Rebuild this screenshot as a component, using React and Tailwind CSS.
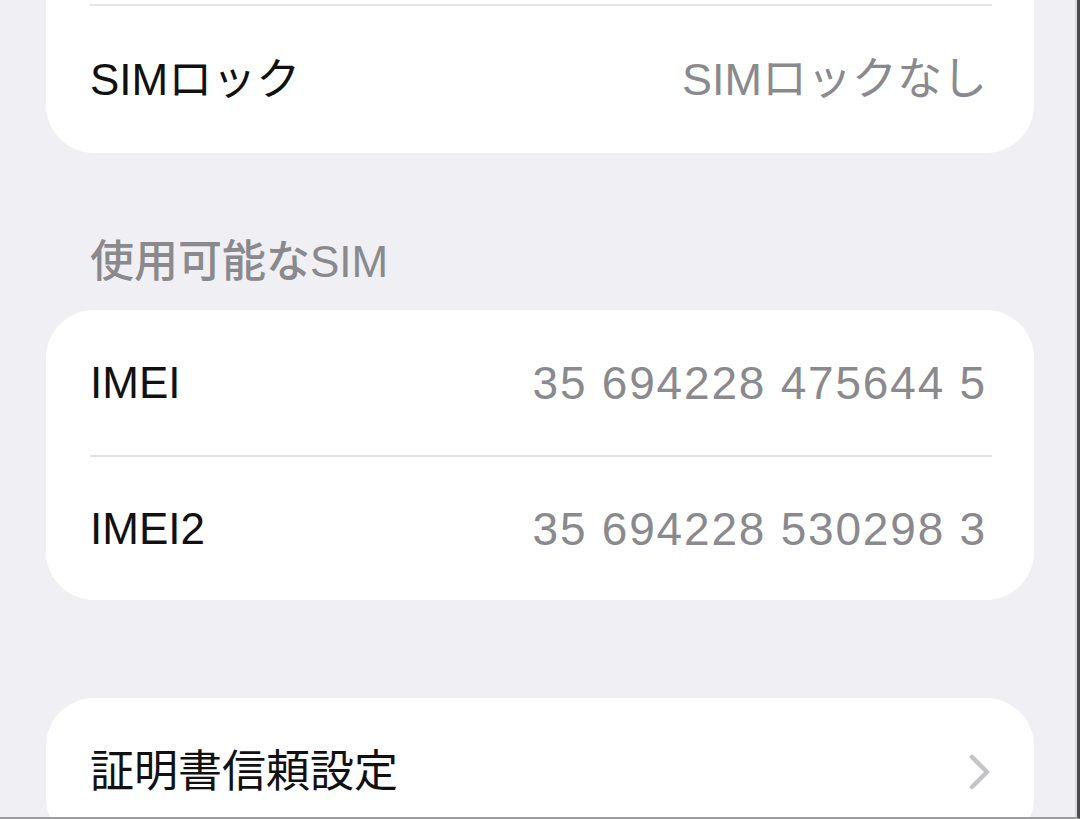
const font = { fontFamily: '"Liberation Sans", "Noto Sans CJK JP", sans-serif' };

const Chevron = () => (
  <svg width="22" height="36" viewBox="0 0 22 36" className="mr-[1px]">
    <polyline points="3,3 18,18 3,33" fill="none" stroke="#c4c4c7" strokeWidth="4.5" strokeLinecap="round" strokeLinejoin="round" />
  </svg>
);

const Row = ({ label, value, chevron, divider, wide, h = "h-[145px]" }) => (
  <div className={`${h} shrink-0 ml-[44px] mr-[42px] flex items-center justify-between ${divider ? "border-t-2 border-[#e4e4e7]" : ""}`}>
    <span className="text-[44px] leading-[44px] text-[#111111]">{label}</span>
    {value && (
      <span className={`pr-[5px] text-[#8a8a8e] ${wide ? "text-[46px] leading-[46px] tracking-[1.8px]" : "text-[45px] leading-[46px]"}`}>
        {value}
      </span>
    )}
    {chevron && <Chevron />}
  </div>
);

const App = () => {
  return (
    <div className="w-[1080px] h-[819px] overflow-hidden bg-[#f0f0f4] border-r-[3px] border-r-[#4b4b4e] border-b-2 border-b-[#9c9c9f]" style={font}>
      <div className="h-full border-r-2 border-r-[#dcdce0] pl-[46px] pr-[41px] flex flex-col">
        <div className="shrink-0 bg-white rounded-b-[48px] pt-[4px]">
          <Row label="SIMロック" value="SIMロックなし" divider h="h-[149px]" />
        </div>

        <div className="shrink-0 pt-[87px] pb-[26px] pl-[44px] text-[44px] leading-[44px] font-medium text-[#8a8a8e]">
          使用可能なSIM
        </div>

        <div className="shrink-0 bg-white rounded-[48px]">
          <Row label="IMEI" value="35 694228 475644 5" wide />
          <Row label="IMEI2" value="35 694228 530298 3" wide divider />
        </div>

        <div className="shrink-0 h-[98px]" />

        <div className="shrink-0 bg-white rounded-[48px]">
          <Row label="証明書信頼設定" chevron h="h-[148px]" />
        </div>
      </div>
    </div>
  );
};

export default App;
